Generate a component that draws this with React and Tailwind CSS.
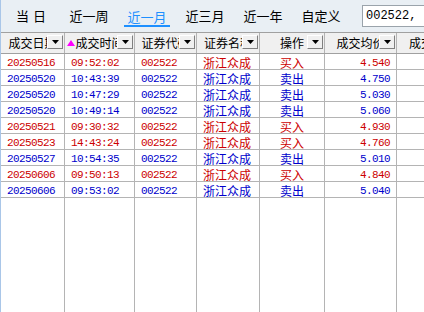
import React from 'react';

const cjk = "font-['Noto_Sans_CJK_SC','Noto_Sans_CJK_JP',sans-serif]";
const mono = "font-['Liberation_Mono',monospace] text-[11px] tracking-[-0.6px]";
const cols = 'grid grid-cols-[64px_70px_62px_63px_65px_72px_1fr]';

const trades = [
  ['20250516', '09:52:02', '买入', '4.540'],
  ['20250520', '10:43:39', '卖出', '4.750'],
  ['20250520', '10:47:29', '卖出', '5.030'],
  ['20250520', '10:49:14', '卖出', '5.060'],
  ['20250521', '09:30:32', '买入', '4.930'],
  ['20250523', '14:43:24', '买入', '4.760'],
  ['20250527', '10:54:35', '卖出', '5.010'],
  ['20250606', '09:50:13', '买入', '4.840'],
  ['20250606', '09:53:02', '卖出', '5.040'],
];

const tabs = ['当 日', '近一周', '近一月', '近三月', '近一年', '自定义'];

const DropBtn = () => (
  <div className="absolute right-[1px] top-[2px] w-[16px] h-[14px] bg-[#f0f0f0] border border-t-white border-l-white border-r-[#808080] border-b-[#808080] flex items-center justify-center">
    <svg width="7" height="4" viewBox="0 0 7 4">
      <path d="M0 0H7L3.5 4Z" fill="#000" />
    </svg>
  </div>
);

const HeadCell = ({ label, sorted, noBtn }) => (
  <div className="relative h-full border-r border-[#b4b4b4] overflow-hidden">
    <div className={`h-full flex items-center justify-center whitespace-nowrap text-[12px] text-black ${cjk}`}>
      {label}
    </div>
    {sorted && (
      <svg className="absolute left-[2px] top-[7px]" width="8" height="6" viewBox="0 0 8 6">
        <path d="M4 0L8 6H0Z" fill="#ff00ff" />
      </svg>
    )}
    {!noBtn && <DropBtn />}
  </div>
);

export default function App() {
  return (
    <div className="w-[424px] h-[312px] overflow-hidden bg-white border-l border-[#a9c6e8] flex flex-col">
      {/* toolbar */}
      <div className={`h-[32px] shrink-0 bg-[#e9eff4] flex items-center pl-[1px] ${cjk}`}>
        {tabs.map((t) => (
          <div key={t} className="w-[58px] flex justify-center">
            {t === '近一月' ? (
              <span className="text-[13px] leading-[16px] text-[#1e90ff] border-b-2 border-[#1e90ff] px-[3px] mt-[4px]">{t}</span>
            ) : t === '当 日' ? (
              <span className="text-[13px] leading-[16px] text-black flex gap-[4px]">
                <span>当</span>
                <span>日</span>
              </span>
            ) : (
              <span className="text-[13px] leading-[16px] text-black">{t}</span>
            )}
          </div>
        ))}
        <div className="ml-[12px] mt-[-1px] h-[22px] flex-1 bg-white border border-[#9aa3ab] border-r-0 flex items-center pl-[3px]">
          <span className="font-['Liberation_Mono',monospace] text-[12px] text-black">002522,</span>
        </div>
      </div>

      {/* header */}
      <div className={`${cols} h-[22px] shrink-0 bg-[#f0f0f0] border-t border-b border-[#a0a0a0]`}>
        <HeadCell label="成交日期" />
        <HeadCell label="成交时间" sorted />
        <HeadCell label="证券代码" />
        <HeadCell label="证券名称" />
        <HeadCell label="操作" />
        <HeadCell label="成交均价" />
        <div className={`h-full flex items-center pl-[12px] whitespace-nowrap overflow-hidden text-[12px] ${cjk}`}>成交</div>
      </div>

      {/* rows */}
      {trades.map(([date, time, op, price], i) => {
        const color = op === '买入' ? 'text-[#cc0000]' : 'text-[#0000cc]';
        return (
          <div key={i} className={`${cols} h-[16px] shrink-0 border-b border-[#b4b4b4] ${color}`}>
            <div className={`border-r border-[#b4b4b4] pl-[6px] flex items-center ${mono}`}>{date}</div>
            <div className={`border-r border-[#b4b4b4] pl-[6px] flex items-center ${mono}`}>{time}</div>
            <div className={`border-r border-[#b4b4b4] pl-[6px] flex items-center ${mono}`}>002522</div>
            <div className={`border-r border-[#b4b4b4] pl-[6px] flex items-center whitespace-nowrap overflow-hidden text-[12px] ${cjk}`}>浙江众成</div>
            <div className={`border-r border-[#b4b4b4] flex items-center justify-center text-[12px] ${cjk}`}>{op}</div>
            <div className={`border-r border-[#b4b4b4] pr-[6px] flex items-center justify-end ${mono}`}>{price}</div>
            <div />
          </div>
        );
      })}

      {/* empty rest of grid */}
      <div className={`${cols} flex-1`}>
        <div className="border-r border-[#b4b4b4]" />
        <div className="border-r border-[#b4b4b4]" />
        <div className="border-r border-[#b4b4b4]" />
        <div className="border-r border-[#b4b4b4]" />
        <div className="border-r border-[#b4b4b4]" />
        <div className="border-r border-[#b4b4b4]" />
        <div />
      </div>
    </div>
  );
}
